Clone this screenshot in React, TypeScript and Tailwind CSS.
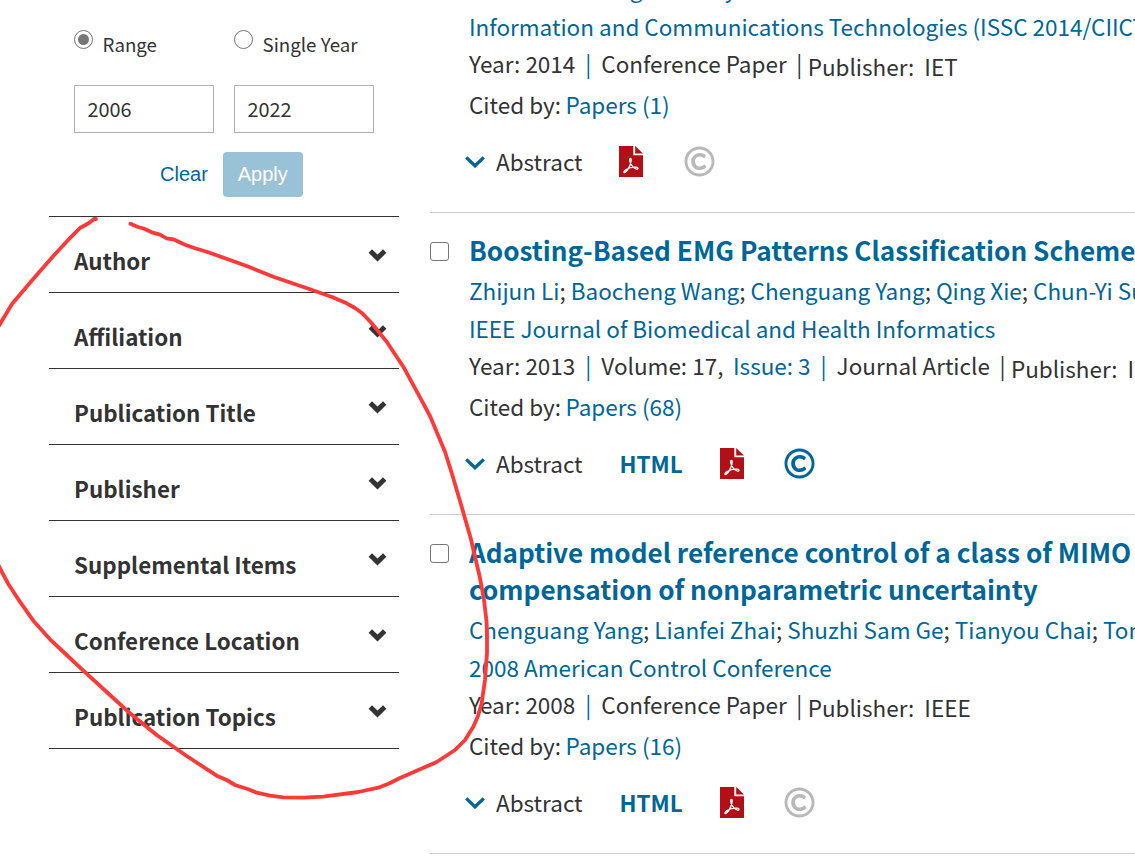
import type { ReactNode } from "react";
import { FaRegCopyright } from "react-icons/fa";

const filters = [
  "Author",
  "Affiliation",
  "Publication Title",
  "Publisher",
  "Supplemental Items",
  "Conference Location",
  "Publication Topics",
];

type Result = {
  title: string[];
  authors: string[];
  venue: string[];
  year: string;
  volume?: string;
  issue?: string;
  kind: string;
  publisher: string;
  cited: number;
  html: boolean;
  rights: boolean;
};

const results: Result[] = [
  {
    title: ["Boosting-Based EMG Patterns Classification Scheme"],
    authors: ["Zhijun Li", "Baocheng Wang", "Chenguang Yang", "Qing Xie", "Chun-Yi Su"],
    venue: ["IEEE Journal of Biomedical and Health Informatics"],
    year: "2013",
    volume: "17",
    issue: "3",
    kind: "Journal Article",
    publisher: "IEEE",
    cited: 68,
    html: true,
    rights: true,
  },
  {
    title: ["Adaptive model reference control of a class of MIMO", "compensation of nonparametric uncertainty"],
    authors: ["Chenguang Yang", "Lianfei Zhai", "Shuzhi Sam Ge", "Tianyou Chai", "Tong Heng Lee"],
    venue: ["2008 American Control Conference"],
    year: "2008",
    kind: "Conference Paper",
    publisher: "IEEE",
    cited: 16,
    html: true,
    rights: false,
  },
];

const first: Result = {
  title: [],
  authors: [],
  venue: [
    "25th IET Irish Signals & Systems Conference 2014 and 2014 China-Ireland",
    "Information and Communications Technologies (ISSC 2014/CIICT 2014)",
  ],
  year: "2014",
  kind: "Conference Paper",
  publisher: "IET",
  cited: 1,
  html: false,
  rights: false,
};

function Bold({ className, children }: { className: string; children: ReactNode }) {
  return <span className={`font-bold ${className}`}>{children}</span>;
}

function PdfIcon() {
  return (
    <svg viewBox="0 0 24 31" className="mt-px h-[31px] w-6 shrink-0">
      <path d="M0 0H14.3V9.3H24V31H0Z" fill="#b11116" />
      <path d="M16.2 0L24 7.6H16.2Z" fill="#b11116" />
      <path
        d="M11.3 12.4C9.9 12.8 10.9 16 12.3 18.7C13.6 21.1 15.6 22.5 17.6 23.1C19.4 23.4 19.6 21.4 17.3 21.2C14 20.9 9.6 22 7 23.6C4.2 25.3 4.6 27.4 6.3 26.3C8.6 24.5 11 19.6 11.8 16.4C12.3 14.2 12.4 12.3 11.3 12.4Z"
        fill="none"
        stroke="#fff"
        strokeWidth="1.35"
        strokeLinejoin="round"
      />
    </svg>
  );
}

function Meta({ item }: { item: Result }) {
  return (
    <div className="flex h-[37px] items-start leading-[37px]">
      <span>Year: {item.year}</span>
      <span className="w-[26px] text-center text-[#006699]">|</span>
      {item.volume && (
        <>
          <span>Volume: {item.volume},</span>
          <span className="ml-[9.6px] text-[#006699]">Issue: {item.issue}</span>
          <span className="w-[26px] text-center text-[#006699]">|</span>
        </>
      )}
      <span>{item.kind}</span>
      <span className="w-[21px] pl-[9.6px]">|</span>
      <span className="relative top-[3px]">Publisher:</span>
      <span className="relative top-[3px] ml-[10px]">{item.publisher}</span>
    </div>
  );
}

function Body({ item }: { item: Result }) {
  return (
    <>
      {item.venue.map((line) => (
        <div key={line} className="h-[37.5px] leading-[37.5px] text-[#006699]">
          {line}
        </div>
      ))}
      <Meta item={item} />
      <div className="mt-[3px] h-[38px] leading-[38px]">
        Cited by: <a className="-ml-[0.5px] text-[#006699]">Papers ({item.cited})</a>
      </div>
      <div className="mt-[19px] mb-8 flex h-[38px] items-center leading-[38px]">
        <svg viewBox="0 0 20 12" className="-ml-1 mt-[2px] h-3 w-5 shrink-0">
          <path d="M1.2 1.4L10 9.8L18.8 1.4" fill="none" stroke="#006699" strokeWidth="3.3" />
        </svg>
        <span className="ml-[11px] w-[123.4px]">Abstract</span>
        {item.html && <Bold className="w-[100.6px] text-[#006699]">HTML</Bold>}
        <PdfIcon />
        <FaRegCopyright
          size={31}
          className={item.rights ? "mt-px ml-[40.5px] text-[#006699]" : "mt-px ml-[40.5px] text-[#b9b9b9]"}
        />
      </div>
    </>
  );
}

function ResultItem({ item }: { item: Result }) {
  return (
    <section className="flex border-b border-[#ccc] pt-[19px]">
      <input
        type="checkbox"
        className="mt-[10px] mr-[20.5px] h-[18.5px] w-[18.5px] shrink-0 appearance-none rounded-[3px] border-[1.5px] border-[#767676]"
      />
      <div>
        <h2 className="text-[26.15px] font-bold leading-[37px] text-[#006699]">
          {item.title.map((line) => (
            <div key={line}>{line}</div>
          ))}
        </h2>
        <div className="mt-[2px] h-[38.5px] leading-[38px]">
          {item.authors.map((name, i) => (
            <span key={name}>
              {i > 0 && "; "}
              <a className="text-[#006699]">{name}</a>
            </span>
          ))}
        </div>
        <Body item={item} />
      </div>
    </section>
  );
}

function Radio({ label, checked }: { label: string; checked?: boolean }) {
  return (
    <label className="flex w-40 items-start text-[18.7px]">
      <span className="mt-[10px] flex h-[19px] w-[19px] items-center justify-center rounded-full border-[1.4px] border-[#767676]">
        {checked && <span className="h-[11.5px] w-[11.5px] rounded-full bg-[#767676]" />}
      </span>
      <span className="mt-2 ml-[9.6px] leading-[32px]">{label}</span>
    </label>
  );
}

export default function App() {
  return (
    <div className="relative flex h-[858px] w-[1135px] overflow-hidden whitespace-nowrap bg-white font-['Noto_Sans_CJK_SC','Noto_Sans',sans-serif] text-[22.5px] text-[#333]">
      <aside className="ml-[49px] w-[350px] shrink-0">
        <div className="h-[217px] border-b border-[#333] pt-5 pl-[25px]">
          <div className="flex h-[65px]">
            <Radio label="Range" checked />
            <Radio label="Single Year" />
          </div>
          <div className="flex gap-5 text-[19.9px]">
            <div className="h-12 w-[140px] border border-[#b0b0b0] pl-[12.5px] leading-[46px]">2006</div>
            <div className="h-12 w-[140px] border border-[#b0b0b0] pl-[12.5px] leading-[46px]">2022</div>
          </div>
          <div className="mt-[19px] flex items-start pl-[86px] font-['Liberation_Sans',sans-serif] text-[20px] leading-[44px]">
            <a className="text-[#006699]">Clear</a>
            <button className="ml-[15px] flex h-[45px] w-20 items-start justify-center rounded-[4px] bg-[#99c2d7] text-white">
              Apply
            </button>
          </div>
        </div>
        {filters.map((name) => (
          <div key={name} className="flex h-[76px] items-start justify-between border-b border-[#333] pr-[12px] pl-[25px]">
            <Bold className="mt-6 text-[22.4px] leading-[38px]">{name}</Bold>
            <svg viewBox="0 0 19 13" className="mt-[32px] h-[13px] w-[19px]">
              <path d="M2.3 2.1L9.5 9L16.7 2.1" fill="none" stroke="#333" strokeWidth="4.9" />
            </svg>
          </div>
        ))}
      </aside>
      <main className="ml-[31px] w-[760px] shrink-0">
        <section className="flex h-[213px] flex-col justify-end border-b border-[#ccc] pl-[39px]">
          <Body item={first} />
        </section>
        {results.map((item) => (
          <ResultItem key={item.year} item={item} />
        ))}
      </main>
      <svg viewBox="0 0 1135 858" className="pointer-events-none absolute inset-0 h-[858px] w-[1135px]">
        <g fill="none" stroke="#ff3838" strokeWidth="3.8" strokeLinejoin="round" strokeLinecap="round">
          <path d="M96 219L94 219L89 223L80 228L70.7 237.3L53.3 256L31.7 280.7L12 304L0 324L-4 331" />
          <path d="M130.5 223.7L137.3 226.7L145 229L152.7 232.7L160 234.7L166.7 238.3L173.3 239.3L185 244.7L195 248.3L206.7 251.7L246.7 266L273.3 276.7L310 289.3L332 297L346.7 303.3L355 308L362.5 313.5L371.7 323.3L386.7 341.7L403.3 366.7L420 397.3L430 416L445 451.7L452 474L460 501L470.7 538.3L480 578L484 600L486.5 621L487 633L487 653L485 680L481.7 703L478 716L473.3 726.7L465 740L455 750L436.7 762L416.7 770.7L400 778L389 783.5L378.3 787.7L358.3 792L323.3 796.7L303.3 797.7L283.3 797.3L270 795.7L256.7 792.7L248.3 789.3L235 785L226.7 780L216.7 775.7L186.7 756L156.7 735L130 713.3L110 695L83.3 670.7L66.7 655L50 639.3L33.3 620.7L18.3 599.3L8.3 584L0 568.5L-4 560" />
        </g>
      </svg>
    </div>
  );
}
